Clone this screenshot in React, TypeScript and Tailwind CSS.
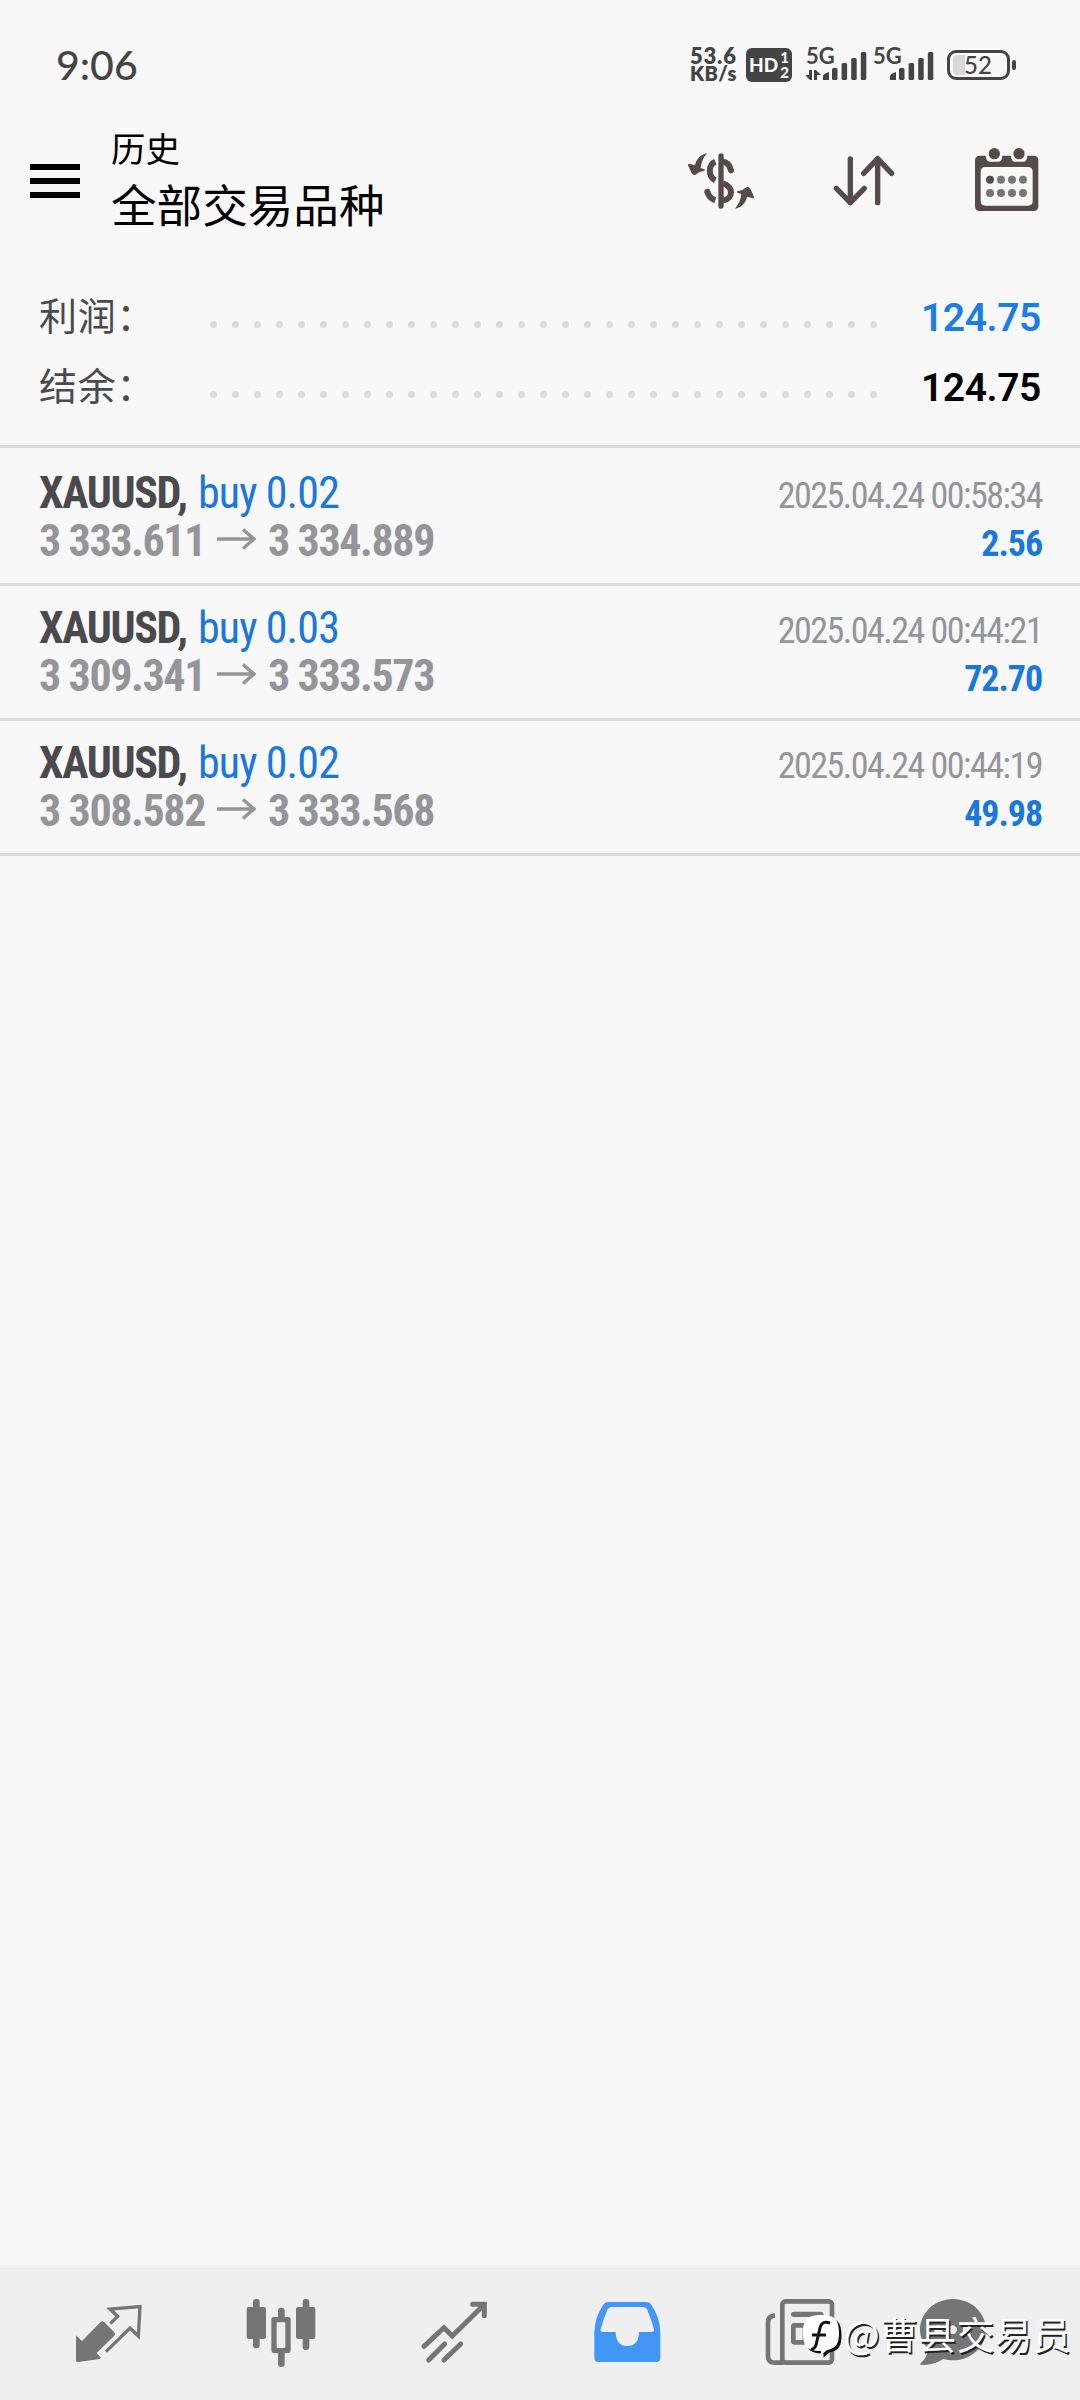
import { type ReactElement, type ReactNode } from 'react';

interface Deal {
  symbol: string;
  action: string;
  open: string;
  close: string;
  time: string;
  profit: string;
}

const deals: Deal[] = [
  {
    symbol: 'XAUUSD,',
    action: 'buy 0.02',
    open: '3 333.611',
    close: '3 334.889',
    time: '2025.04.24 00:58:34',
    profit: '2.56',
  },
  {
    symbol: 'XAUUSD,',
    action: 'buy 0.03',
    open: '3 309.341',
    close: '3 333.573',
    time: '2025.04.24 00:44:21',
    profit: '72.70',
  },
  {
    symbol: 'XAUUSD,',
    action: 'buy 0.02',
    open: '3 308.582',
    close: '3 333.568',
    time: '2025.04.24 00:44:19',
    profit: '49.98',
  },
];

function Signal({ active = false }: { active?: boolean }): ReactElement {
  return (
    <div className="relative h-[34px] w-[61px]">
      <svg viewBox="0 0 61 34" className="h-full w-full" fill="currentColor">
        <path d="M17 32v-4q0-2 6-4v8z" />
        <rect x="26" y="20" width="5.5" height="12" rx="1.5" />
        <rect x="35.6" y="15" width="5.5" height="17" rx="1.5" />
        <rect x="45.2" y="10" width="5.5" height="22" rx="1.5" />
        <rect x="54.8" y="4" width="5.5" height="28" rx="1.5" />
        {active && (
          <path d="M3 22h3v10h-2l-5-5h4zM8 32V22h2l5 5h-4v5z" />
        )}
      </svg>
      <span className="absolute -top-[3px] left-0 font-['Lato'] text-[22px] leading-[22px] font-bold">
        5G
      </span>
    </div>
  );
}

function StatusBar(): ReactElement {
  return (
    <div className="flex h-[102px] items-center justify-between pt-[27px] pr-[64px] text-[#444444]">
      <span className="pl-[56px] font-['Lato'] text-[41px] leading-none font-medium">
        9:06
      </span>
      <div className="flex h-[34px] items-center">
        <div className="w-[56px] font-['Lato'] text-[20px] leading-[19px] font-extrabold">
          <div className="text-[22px] leading-[17px] tracking-[0.8px]">53.6</div>
          <div className="tracking-[0.4px]">KB/s</div>
        </div>
        <div className="mr-[14px] flex h-[34px] w-[46px] items-center justify-center gap-[2px] rounded-[6px] bg-[#444444] font-['Lato'] font-black text-[#f8f8f8]">
          <span className="text-[19px] leading-none">HD</span>
          <span className="flex flex-col text-[15px] leading-[15px]">
            <span>1</span>
            <span>2</span>
          </span>
        </div>
        <Signal active />
        <div className="w-[6px]" />
        <Signal />
        <div className="ml-[13px] flex h-[30px] w-[63px] items-center rounded-[9px] border-[3px] border-[#444444] pl-[3px]">
          <div className="h-[20px] w-[12px] rounded-l-[4px] bg-[#d8d8d8]" />
          <span className="-ml-px font-['Lato'] text-[24px] leading-none font-medium">
            52
          </span>
        </div>
        <div className="ml-[2px] h-[10px] w-[4px] rounded-[2px] bg-[#444444]" />
      </div>
    </div>
  );
}

function SwapCurrencyIcon(): ReactElement {
  return (
    <svg viewBox="78 75 216 216" className="h-[72px] w-[72px]" fill="#564b49">
      <rect x="178" y="100" width="16" height="166" rx="8" />
      <g fill="none" stroke="#564b49" strokeWidth="18">
        <path d="M169 125C147 134 147 170 169 181" />
        <path d="M192 125Q210 127 216 151" strokeLinecap="round" />
        <path d="M192 190C224 200 224 236 192 242" />
        <path d="M145 215Q150 234 169 241" />
      </g>
      <circle cx="145" cy="215" r="9" />
      <path
        id="turn"
        d="M144 100C125 103 112 117 108 136L91 131Q86 131 87 136L98 160Q103 168 110 164Q120 154 134 153Q141 151 136 148L125 144Q127 120 144 100Z"
      />
      <use href="#turn" transform="rotate(180 186 183)" />
    </svg>
  );
}

function SortIcon(): ReactElement {
  return (
    <svg
      viewBox="507 75 216 216"
      className="h-[72px] w-[72px]"
      fill="none"
      stroke="#564b49"
      strokeWidth="16"
      strokeLinecap="round"
      strokeLinejoin="round"
    >
      <path d="M574 117V248M532 205L574 248L616 205" />
      <path d="M656 248V116M614 160L656 116L698 160" />
    </svg>
  );
}

function CalendarIcon(): ReactElement {
  return (
    <svg viewBox="933 75 216 216" className="h-[72px] w-[72px]" fill="#564b49">
      <path
        fillRule="evenodd"
        d="M959 107H977Q977 125 992 125H1014Q1027 125 1027 107H1053Q1053 125 1066 125H1088Q1102 125 1102 107H1121Q1135 107 1135 121V259Q1135 273 1121 273H959Q945 273 945 259V121Q945 107 959 107ZM976 141Q962 141 962 155V243Q962 257 976 257H1104Q1118 257 1118 243V155Q1118 141 1104 141Z"
      />
      <circle cx="1003" cy="101" r="17" />
      <circle cx="1077" cy="101" r="17" />
      <circle cx="990" cy="179" r="12" />
      <g fill="#777473">
        <circle cx="1023" cy="179" r="12" />
        <circle cx="1056" cy="179" r="12" />
        <circle cx="1089" cy="179" r="12" />
        <circle cx="990" cy="219" r="12" />
        <circle cx="1023" cy="219" r="12" />
        <circle cx="1056" cy="219" r="12" />
        <circle cx="1089" cy="219" r="12" />
      </g>
    </svg>
  );
}

function Header(): ReactElement {
  return (
    <header className="flex h-[158px] items-center pr-[37px] pl-[30px]">
      <button type="button" className="flex flex-col gap-[8px]">
        <span className="h-[6px] w-[50px] bg-black" />
        <span className="h-[6px] w-[50px] bg-black" />
        <span className="h-[6px] w-[50px] bg-black" />
      </button>
      <div className="ml-[31px] flex-1 pb-[13px] font-['Noto_Sans_CJK_SC',sans-serif] text-black">
        <div className="text-[34.5px] leading-[56px]">历史</div>
        <h1 className="text-[45.6px] leading-[56px]">全部交易品种</h1>
      </div>
      <div className="flex gap-[71px]">
        <SwapCurrencyIcon />
        <SortIcon />
        <CalendarIcon />
      </div>
    </header>
  );
}

interface SummaryRowProps {
  label: string;
  value: string;
  className: string;
}

function SummaryRow({ label, value, className }: SummaryRowProps): ReactElement {
  return (
    <div className="flex h-[70px] items-center pr-[39px] pl-[39px]">
      <span className="w-[171px] pb-[6px] font-['Noto_Sans_CJK_SC',sans-serif] text-[38px] leading-[56px] tracking-[0.8px] text-[#4a4a4e]">
        {label}
      </span>
      <div className="flex gap-[15px] pt-[15px]">
        {Array.from({ length: 31 }, (_, i) => (
          <span key={i} className="h-[7px] w-[7px] rounded-full bg-[#dcdcdc]" />
        ))}
      </div>
      <span
        className={`ml-auto pt-[2px] font-['Roboto'] text-[39px] leading-none font-semibold tracking-[-0.4px] ${className}`}
      >
        {value}
      </span>
    </div>
  );
}

function DealRow({ deal }: { deal: Deal }): ReactElement {
  return (
    <li className="flex h-[135px] justify-between border-b-[3px] border-[#dcdcdc] pt-[18px] pr-[38px] pl-[39px] font-['Roboto_Condensed',Roboto,sans-serif] leading-[48px] whitespace-nowrap">
      <div className="text-[44px]">
        <div className="flex">
          <span className="w-[159px] font-bold tracking-[-1.4px] text-[#4a4a4e]">
            {deal.symbol}
          </span>
          <span className="tracking-[-0.9px] text-[#1a78dc]">
            {deal.action}
          </span>
        </div>
        <div className="flex font-bold tracking-[-1.4px] text-[#949599]">
          <span className="w-[178px]">{deal.open}</span>
          <svg
            viewBox="0 0 39 22"
            className="mt-[11px] mr-[12px] h-[22px] w-[39px]"
            fill="none"
            stroke="currentColor"
            strokeWidth="3.4"
          >
            <path d="M0 11H37M26 1.5L37 11L26 20.5" />
          </svg>
          <span>{deal.close}</span>
        </div>
      </div>
      <div className="pt-[3px] text-right text-[36px]">
        <div className="tracking-[-1.5px] text-[#949599]">{deal.time}</div>
        <div className="font-bold tracking-[-1.1px] text-[#1a78dc]">
          {deal.profit}
        </div>
      </div>
    </li>
  );
}

interface TabProps {
  viewBox: string;
  className?: string;
  children: ReactNode;
}

function Tab({
  viewBox,
  className = 'w-[173px] text-[#757575]',
  children,
}: TabProps): ReactElement {
  return (
    <button
      type="button"
      className={`flex items-center justify-center ${className}`}
    >
      <svg viewBox={viewBox} className="h-[72px] w-[72px]" fill="currentColor">
        {children}
      </svg>
    </button>
  );
}

function TabBar(): ReactElement {
  return (
    <nav className="flex h-[135px] bg-[#efefef] pl-[21px]">
      <Tab viewBox="36 18 216 216">
        <path d="M48 133L66 150L122 93Q127 88 132 93L163 124Q168 129 163 134L110 186L123 200Q120 204 114 205L54 213Q48 214 48 208Z" />
        <path
          fill="none"
          stroke="currentColor"
          strokeWidth="10"
          d="M151 98L173 76L150 54L240 47L235 135L210 111L138 182"
        />
      </Tab>
      <Tab viewBox="735 138 216 216">
        <rect x="740" y="168" width="58" height="96" rx="7" />
        <rect x="759" y="144" width="20" height="148" rx="9" />
        <path
          fillRule="evenodd"
          d="M821 198H865Q872 198 872 205V299Q872 306 865 306H821Q814 306 814 299V205Q814 198 821 198ZM833 214Q830 214 830 217V288Q830 291 833 291H853Q856 291 856 288V217Q856 214 853 214Z"
        />
        <path d="M834 200V179Q834 170 844 170T854 179V200ZM834 304V340Q834 348 844 348T854 340V304Z" />
        <rect x="888" y="168" width="58" height="96" rx="7" />
        <rect x="908" y="144" width="20" height="153" rx="9" />
      </Tab>
      <Tab viewBox="54 18 216 216">
        <g
          fill="none"
          stroke="currentColor"
          strokeWidth="15"
          strokeLinecap="round"
        >
          <path d="M72 166L132 110L157 135L248 45" />
          <path d="M218 40H253V74" />
          <path d="M86 207L134 159M132 207L182 159" />
        </g>
      </Tab>
      <Tab viewBox="573 18 216 216" className="w-[173px] text-[#4296f6]">
        <path
          fillRule="evenodd"
          d="M626 33H740Q748 33 753 40Q781 80 781 126V200Q781 213 768 213H596Q583 213 583 200V126Q583 80 611 40Q616 33 626 33ZM635 48Q627 48 623 55Q610 84 602 115Q600 123 608 123H647Q648 165 682 165Q716 165 717 123H755Q764 123 762 115Q754 84 742 57Q738 48 730 48Z"
        />
      </Tab>
      <Tab viewBox="45 18 216 216">
        <g fill="none" stroke="currentColor" strokeWidth="14">
          <rect x="100" y="31" width="149" height="184" rx="10" />
          <path d="M78 73Q57 75 57 94V194Q57 215 78 215H104" />
          <rect x="133" y="103" width="35" height="51" rx="3" />
        </g>
        <rect x="126" y="62" width="97" height="16" rx="8" />
        <rect x="186" y="98" width="37" height="14" rx="7" />
        <rect x="186" y="147" width="37" height="14" rx="7" />
      </Tab>
      <Tab viewBox="501 18 216 216" className="w-[134px] text-[#757575]">
        <path
          fillRule="evenodd"
          d="M609 24C664 24 708 66 708 116S664 208 609 208Q594 208 580 204Q552 222 514 222Q508 221 513 216Q532 198 535 175Q510 148 510 116C510 66 554 24 609 24ZM565 103a13 13 0 1 0 .1 0ZM608 103a13 13 0 1 0 .1 0ZM651 103a13 13 0 1 0 .1 0Z"
        />
      </Tab>
    </nav>
  );
}

function AuthorTag(): ReactElement {
  return (
    <div className="absolute right-[9px] bottom-[42px] flex items-center text-white">
      <svg viewBox="0 0 40 44" className="mt-[7px] mr-[2px] h-[44px] w-[40px]">
        <path
          fill="#111111"
          d="M20 2C34 2 38 7 38 20C38 31 35 35 26 37L20 42V38C6 38 2 33 2 20C2 7 6 2 20 2Z"
          transform="translate(1.500 1.500)"
        />
        <path
          fill="#ffffff"
          d="M19 1C33 1 37 6 37 19C37 30 34 34 25 36L19 41V37C5 37 1 32 1 19C1 6 5 1 19 1Z"
        />
        <path
          d="M28 9Q20 6 18 14L14 31Q12 36 9 35M10 21H24"
          fill="none"
          stroke="#111111"
          strokeWidth="3"
        />
      </svg>
      <span className="font-['Noto_Sans_CJK_SC',sans-serif] text-[38px] leading-[44px] tracking-[0.2px] [text-shadow:1.5px_1.5px_0_#222]">
        @曹县交易员
      </span>
    </div>
  );
}

export default function App(): ReactElement {
  return (
    <div className="relative flex h-[2400px] w-[1080px] flex-col overflow-hidden bg-[#f8f8f8]">
      <StatusBar />
      <Header />
      <main className="flex-1 pt-[22px]">
        <section className="h-[166px] border-b-[3px] border-[#dcdcdc]">
          <SummaryRow label="利润：" value="124.75" className="text-[#1a7ee6]" />
          <SummaryRow label="结余：" value="124.75" className="text-black" />
        </section>
        <ul className="pt-[3px]">
          {deals.map((deal) => (
            <DealRow key={deal.time} deal={deal} />
          ))}
        </ul>
      </main>
      <TabBar />
      <AuthorTag />
    </div>
  );
}
